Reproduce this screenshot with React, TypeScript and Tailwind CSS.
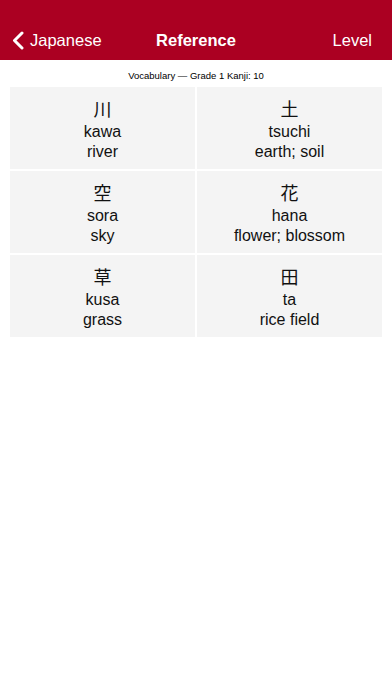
interface Entry {
  kanji: string
  reading: string
  meaning: string
}

const entries: Entry[] = [
  { kanji: "川", reading: "kawa", meaning: "river" },
  { kanji: "土", reading: "tsuchi", meaning: "earth; soil" },
  { kanji: "空", reading: "sora", meaning: "sky" },
  { kanji: "花", reading: "hana", meaning: "flower; blossom" },
  { kanji: "草", reading: "kusa", meaning: "grass" },
  { kanji: "田", reading: "ta", meaning: "rice field" },
]

export default function App() {
  return (
    <div
      className="w-[392px] h-[696px] bg-white text-black"
      style={{ fontFamily: '"Liberation Sans", "Noto Sans CJK JP", sans-serif' }}
    >
      <header className="h-[60px] bg-[#ab0022] text-white flex items-center pt-[21px] px-[12px] relative">
        <div className="flex items-center gap-[6px]">
          <svg width="12" height="19" viewBox="0 0 12 19" fill="none">
            <path d="M10 2 L2.5 9.5 L10 17" stroke="white" strokeWidth="3" strokeLinecap="round" strokeLinejoin="round" />
          </svg>
          <span className="text-[16.5px]">Japanese</span>
        </div>
        <span className="absolute left-0 right-0 top-[21px] h-[39px] flex items-center justify-center text-[16.5px] font-bold pointer-events-none">
          Reference
        </span>
        <span className="ml-auto text-[16.5px] pr-[8px]">Level</span>
      </header>

      <p className="text-center text-[9.5px] pt-[9px] pb-[5px] leading-[13px]">Vocabulary — Grade 1 Kanji: 10</p>

      <div className="grid grid-cols-2 gap-[2px] px-[10px]">
        {entries.map((e) => (
          <EntryCard key={e.kanji} entry={e} />
        ))}
      </div>
    </div>
  )
}

function EntryCard({ entry }: { entry: Entry }) {
  return (
    <div className="h-[82px] bg-[#f4f4f4] flex flex-col items-center pt-[11px] text-[#111]">
      <span className="text-[18px] leading-[24px]">{entry.kanji}</span>
      <span className="text-[16px] leading-[20px]">{entry.reading}</span>
      <span className="text-[16px] leading-[20px]">{entry.meaning}</span>
    </div>
  )
}
